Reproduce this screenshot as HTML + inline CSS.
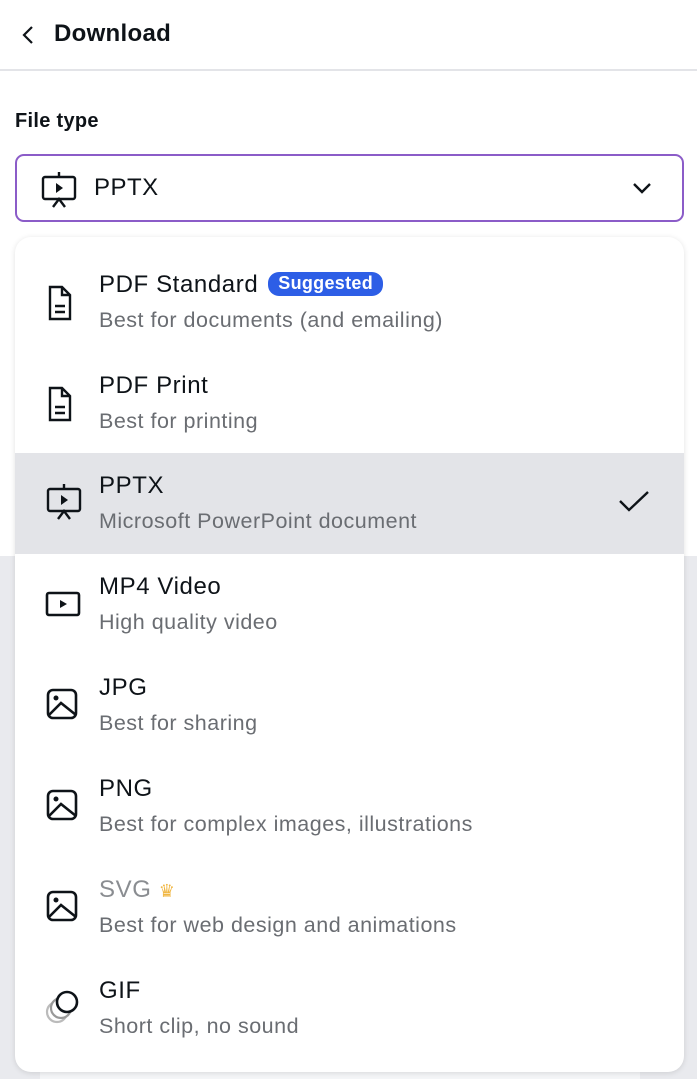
<!DOCTYPE html>
<html><head><style>
*{margin:0;padding:0;box-sizing:border-box}
body{width:697px;height:1079px;position:relative;overflow:hidden;background:#fff;font-family:"Liberation Sans",sans-serif;color:#0e1318}
.bg{position:absolute;left:0;top:556px;width:697px;height:523px;background:#e9eaee}
.bgw{position:absolute;left:40px;top:1058px;width:600px;height:21px;background:#f4f5f7}
.hdr{position:absolute;top:0;left:0;width:697px;height:71px;border-bottom:2px solid #e3e4e8}
.hdr .t{position:absolute;left:54px;top:20px;font-size:24px;font-weight:bold;letter-spacing:0.3px}
.ft{position:absolute;left:15px;top:110px;font-size:20px;font-weight:bold;letter-spacing:0.3px}
.sel{position:absolute;left:15px;top:154px;width:669px;height:68px;border:2px solid #8b5cc8;border-radius:9px}
.sel .v{position:absolute;left:77px;top:18px;font-size:24px;letter-spacing:0.5px}
.dd{position:absolute;left:15px;top:237px;width:669px;height:835px;background:#fff;border-radius:16px;box-shadow:0 1px 6px rgba(0,0,0,.12);overflow:hidden}
.row{position:absolute;left:0;width:669px;height:101px}
.row .a{position:absolute;left:84px;top:19px;font-size:24px;letter-spacing:0.6px}
.row .b{position:absolute;left:84px;top:56px;font-size:21.5px;color:#6a6d72;letter-spacing:0.5px}
.row svg.i{position:absolute;left:30px;top:32px}
.sg{display:inline-block;background:#2d5ee6;color:#fff;font-size:18px;font-weight:bold;border-radius:11px;padding:1px 10px 2px;margin-left:10px;vertical-align:3px;letter-spacing:0.3px}
</style></head><body>
<div class="bg"></div><div class="bgw"></div>
<div class="hdr">
<svg style="position:absolute;left:20px;top:24px" width="16" height="22" viewBox="0 0 16 22"><path d="M12 3L4 11l8 8" fill="none" stroke="#0e1318" stroke-width="2.2"/></svg>
<div class="t">Download</div></div>
<div class="ft">File type</div>
<div class="sel">
<svg style="position:absolute;left:23px;top:16px" width="38" height="36" viewBox="0 0 38 36"><rect x="3" y="5" width="32" height="22" rx="2" fill="none" stroke="#0e1318" stroke-width="2.4"/><path d="M19 0v5M13 35l6-8 6 8" fill="none" stroke="#0e1318" stroke-width="2.4"/><path d="M16 11l7 5-7 5z" fill="#0e1318"/></svg>
<div class="v">PPTX</div>
<svg style="position:absolute;left:614px;top:24px" width="22" height="16" viewBox="0 0 22 16"><path d="M3 4l8 8 8-8" fill="none" stroke="#0e1318" stroke-width="2.4"/></svg>
</div>
<div class="dd">
<div class="row" style="top:15px"><svg class="i" width="30" height="38" viewBox="0 0 30 38"><path d="M5 3h12l8 8v24H5z M17 3v8h8 M10 22h10 M10 28h10" fill="none" stroke="#0e1318" stroke-width="2.4"/></svg><div class="a">PDF Standard<span class="sg">Suggested</span></div><div class="b">Best for documents (and emailing)</div></div>
<div class="row" style="top:116px"><svg class="i" width="30" height="38" viewBox="0 0 30 38"><path d="M5 3h12l8 8v24H5z M17 3v8h8 M10 22h10 M10 28h10" fill="none" stroke="#0e1318" stroke-width="2.4"/></svg><div class="a">PDF Print</div><div class="b">Best for printing</div></div>
<div class="row" style="top:216px;background:#e3e4e8"><svg class="i" style="left:30px;top:30px" width="38" height="38" viewBox="0 0 38 38"><rect x="3" y="6" width="32" height="22" rx="2" fill="none" stroke="#0e1318" stroke-width="2.4"/><path d="M19 1v5M13 36l6-8 6 8" fill="none" stroke="#0e1318" stroke-width="2.4"/><path d="M16 12l7 5-7 5z" fill="#0e1318"/></svg><div class="a">PPTX</div><div class="b">Microsoft PowerPoint document</div>
<svg style="position:absolute;left:602px;top:36px" width="34" height="26" viewBox="0 0 34 26"><path d="M3 12l9 9L31 3" fill="none" stroke="#0e1318" stroke-width="2.4"/></svg></div>
<div class="row" style="top:317px"><svg class="i" style="top:37px" width="38" height="28" viewBox="0 0 38 28"><rect x="2" y="2" width="32" height="22" rx="2" fill="none" stroke="#0e1318" stroke-width="2.6"/><path d="M15 9l7 4-7 4z" fill="#0e1318"/></svg><div class="a">MP4 Video</div><div class="b">High quality video</div></div>
<div class="row" style="top:418px"><svg class="i" width="34" height="34" viewBox="0 0 34 34"><rect x="3" y="3" width="28" height="28" rx="5" fill="none" stroke="#0e1318" stroke-width="2.6"/><circle cx="11" cy="11" r="2.5" fill="#0e1318"/><path d="M4 28l12-12 15 12" fill="none" stroke="#0e1318" stroke-width="2.6"/></svg><div class="a">JPG</div><div class="b">Best for sharing</div></div>
<div class="row" style="top:519px"><svg class="i" width="34" height="34" viewBox="0 0 34 34"><rect x="3" y="3" width="28" height="28" rx="5" fill="none" stroke="#0e1318" stroke-width="2.6"/><circle cx="11" cy="11" r="2.5" fill="#0e1318"/><path d="M4 28l12-12 15 12" fill="none" stroke="#0e1318" stroke-width="2.6"/></svg><div class="a">PNG</div><div class="b">Best for complex images, illustrations</div></div>
<div class="row" style="top:620px"><svg class="i" width="34" height="34" viewBox="0 0 34 34"><rect x="3" y="3" width="28" height="28" rx="5" fill="none" stroke="#0e1318" stroke-width="2.6"/><circle cx="11" cy="11" r="2.5" fill="#0e1318"/><path d="M4 28l12-12 15 12" fill="none" stroke="#0e1318" stroke-width="2.6"/></svg><div class="a" style="color:#8a8d91">SVG <span style="color:#f0b642;font-size:18px">♛</span></div><div class="b">Best for web design and animations</div></div>
<div class="row" style="top:721px"><svg class="i" style="left:28px;top:28px" width="40" height="40" viewBox="0 0 40 40"><circle cx="14" cy="26" r="10" fill="none" stroke="#bbb" stroke-width="2.2"/><circle cx="18" cy="22" r="10" fill="#fff" stroke="#999" stroke-width="2.2"/><circle cx="24" cy="16" r="10" fill="#fff" stroke="#0e1318" stroke-width="2.6"/></svg><div class="a">GIF</div><div class="b">Short clip, no sound</div></div>
</div>
</body></html>
